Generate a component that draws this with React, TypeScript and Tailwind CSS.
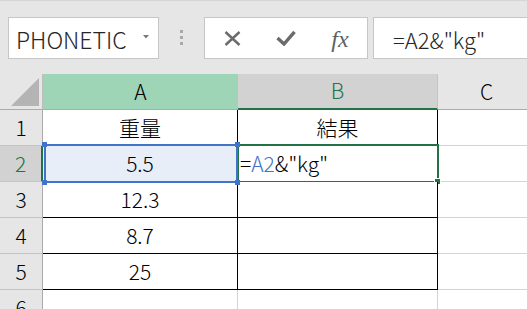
import React from "react";

// Excel-like sheet: formula bar on top, A1:B6 grid below.

const BLUE = "#3f74c8";

const Toolbar: React.FC = () => (
  <div className="h-[74px] border-t border-[#d6d6d6] pt-[16px] flex items-start">
    {/* Name box */}
    <div className="ml-[8px] w-[151px] h-[42px] bg-white border border-[#c6c6c6] flex items-center justify-between pl-[7px] pr-[9px]">
      <span className="text-[23px] leading-none text-[#262626] pt-[3px]">PHONETIC</span>
      <svg width="6" height="4" viewBox="0 0 6 4" className="mb-[2px]">
        <polygon points="0,0 6,0 3,3.5" fill="#7a7a7a" />
      </svg>
    </div>

    {/* Grip dots */}
    <div className="w-[45px] pt-[13px] flex flex-col items-center gap-[3px]">
      <div className="w-[3px] h-[3px] bg-[#a9a9a9]" />
      <div className="w-[3px] h-[3px] bg-[#a9a9a9]" />
      <div className="w-[3px] h-[3px] bg-[#a9a9a9]" />
    </div>

    {/* Cancel / enter / insert function */}
    <div className="w-[164px] h-[42px] bg-white border border-[#c6c6c6] flex items-center">
      <div className="w-[54px] flex justify-center">
        <svg width="17" height="15" viewBox="0 0 17 15">
          <path d="M1.5 1 L15.5 14 M15.5 1 L1.5 14" stroke="#6b6b6b" strokeWidth="2.4" />
        </svg>
      </div>
      <div className="w-[54px] flex justify-center">
        <svg width="20" height="16" viewBox="0 0 20 16">
          <path d="M1.5 8 L8 14 L18.5 1.8" stroke="#6b6b6b" strokeWidth="3.4" fill="none" />
        </svg>
      </div>
      <div className="w-[54px] flex justify-center pt-[1px]">
        <span className="font-['Liberation_Serif',serif] italic text-[24px] leading-none text-[#5f5f5f]">
          fx
        </span>
      </div>
    </div>

    {/* Formula input */}
    <div className="ml-[5px] flex-1 h-[42px] bg-white border border-r-0 border-[#c6c6c6] flex items-center pl-[19px]">
      <span className="text-[22px] leading-none text-[#262626] pt-[2px]">=A2&amp;"kg"</span>
    </div>
  </div>
);

const HeaderRow: React.FC = () => (
  <div className="flex h-[36px]">
    <div className="w-[43px] h-full border-r border-b border-[#bdbdbd] border-b-[#ababab] pl-[11px] pt-[4px]">
      <svg width="28" height="28" viewBox="0 0 28 28">
        <polygon points="28,0 28,28 0,28" fill="#b4b4b4" />
      </svg>
    </div>
    <div className="w-[195px] h-full bg-[#9fd5b7] border-b border-[#8cbfa2] flex items-center justify-center">
      A
    </div>
    <div className="w-[200px] h-full bg-[#d2d2d2] border-r border-[#c4c4c4] border-b-2 border-b-[#217346] flex items-center justify-center text-[#217346]">
      B
    </div>
    <div className="flex-1 h-full border-b border-[#ababab] flex items-center pl-[42px]">
      C
    </div>
  </div>
);

interface RowProps {
  num: number;
  a?: string;
  b?: React.ReactNode;
  active?: boolean;
  outside?: boolean;
}

const Row: React.FC<RowProps> = ({ num, a, b, active, outside }) => {
  const edge = outside ? "border-[#d4d4d4]" : "border-black";
  return (
    <div className="flex h-[36px] shrink-0">
      <div
        className={`w-[43px] h-full border-b border-[#c4c4c4] flex items-center justify-center ${
          active
            ? "bg-[#d2d2d2] border-r-2 border-r-[#217346] text-[#217346]"
            : "bg-[#e6e6e6] border-r border-r-[#ababab]"
        }`}
      >
        {num}
      </div>
      <div
        className={`relative w-[195px] h-full border-r ${outside ? "" : "border-b"} ${edge} flex items-center justify-center ${
          active ? "bg-[#e8eef8]" : "bg-white"
        }`}
      >
        {a}
        {active && (
          <div className="absolute top-[-2px] bottom-[-2px] left-[1px] right-[-1px] border-2 border-[#3f74c8] z-10">
            <div className="absolute -left-[4px] -top-[4px] w-[5px] h-[5px] bg-[#3f74c8]" />
            <div className="absolute -right-[4px] -top-[4px] w-[5px] h-[5px] bg-[#3f74c8]" />
            <div className="absolute -left-[4px] -bottom-[4px] w-[5px] h-[5px] bg-[#3f74c8]" />
            <div className="absolute -right-[4px] -bottom-[4px] w-[5px] h-[5px] bg-[#3f74c8]" />
          </div>
        )}
      </div>
      <div
        className={`relative w-[200px] h-full border-r ${outside ? "" : "border-b"} ${edge} bg-white flex items-center ${
          active ? "justify-start pl-[2px]" : "justify-center"
        }`}
      >
        {b}
        {active && (
          <div className="absolute top-[-2px] bottom-[-2px] left-[-1px] right-[-2px] border-2 border-[#217346]">
            <div className="absolute -right-[4px] -bottom-[4px] w-[7px] h-[7px] bg-[#217346] border border-white" />
          </div>
        )}
      </div>
      <div className={`flex-1 h-full ${outside ? "" : "border-b"} border-[#d4d4d4] bg-white`} />
    </div>
  );
};

export default function App() {
  return (
    <div className="w-[527px] h-[309px] overflow-hidden bg-[#e6e6e6] font-['Noto_Sans_CJK_JP',sans-serif] font-light text-[21px] text-black">
      <Toolbar />
      <HeaderRow />
      <Row num={1} a="重量" b="結果" />
      <Row
        num={2}
        a="5.5"
        active
        b={
          <span>
            =<span style={{ color: BLUE }}>A2</span>&amp;"kg"
          </span>
        }
      />
      <Row num={3} a="12.3" />
      <Row num={4} a="8.7" />
      <Row num={5} a="25" />
      <Row num={6} outside />
    </div>
  );
}
